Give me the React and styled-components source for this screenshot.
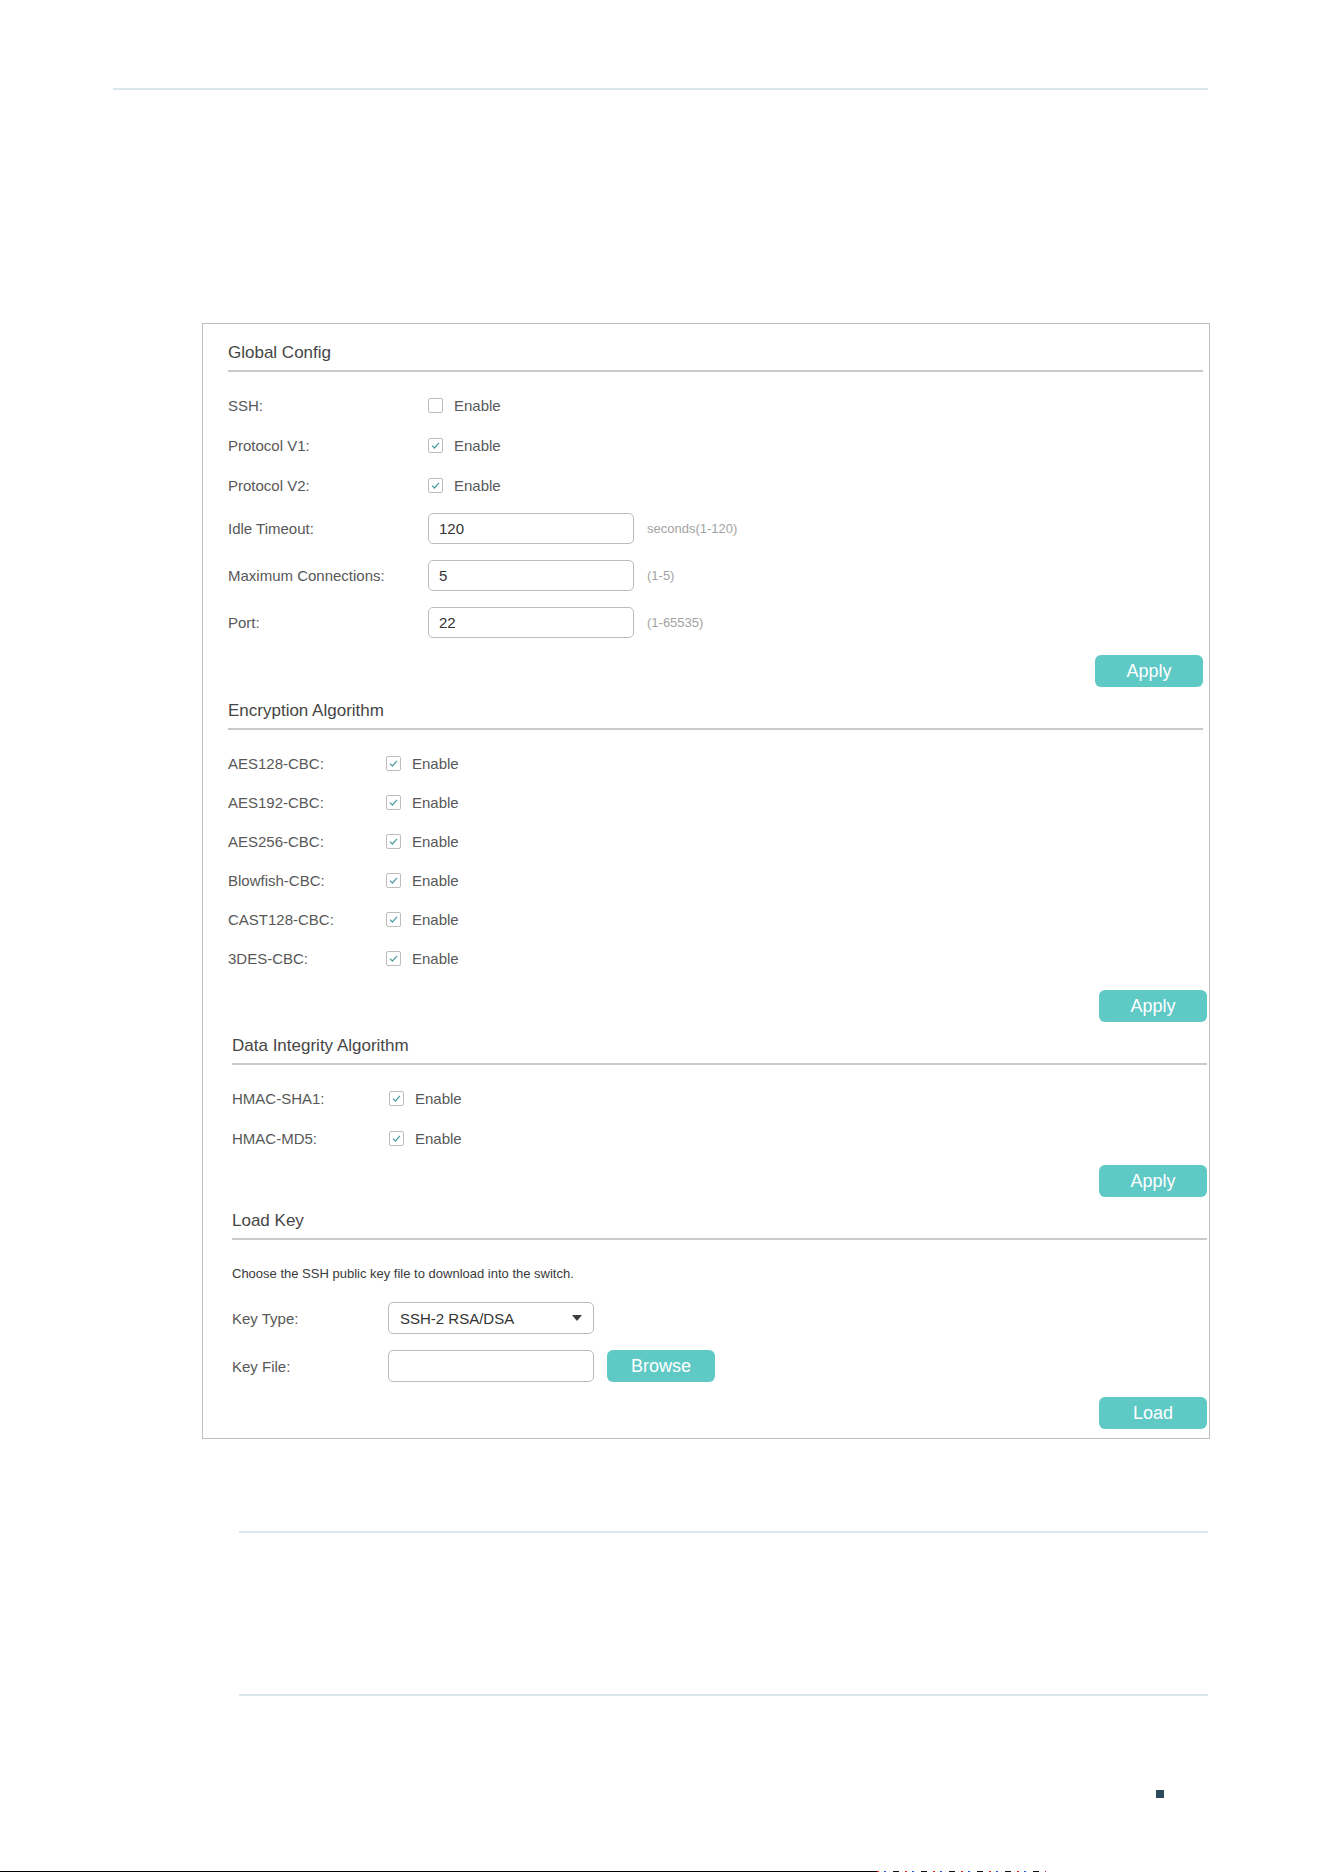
import React from 'react';
import styled, { createGlobalStyle } from 'styled-components';

const GlobalStyle = createGlobalStyle`
  html, body {
    margin: 0;
    padding: 0;
    background: #fff;
  }
  body {
    font-family: "Liberation Sans", Arial, sans-serif;
  }
`;

const Page = styled.div`
  width: 1324px;
  min-height: 1872px;
  padding-top: 88px;
  box-sizing: border-box;
  display: flex;
  flex-direction: column;
  background: #fff;
`;

const Rule = styled.div`
  height: 2px;
  background: #dce7eb;
  margin-left: ${props => props.$left}px;
  margin-top: ${props => props.$top || 0}px;
  width: ${props => 1208 - props.$left}px;
`;

const Figure = styled.div`
  margin: 233px 0 0 202px;
  width: 1008px;
  box-sizing: border-box;
  border: 1px solid #bfbfbf;
  padding: 0 6px 9px 25px;
  color: #555;
`;

const Section = styled.section`
  margin: ${props => props.$top}px ${props => -props.$shift}px 0 ${props => props.$shift}px;
`;

const SectionTitle = styled.h3`
  margin: 0;
  font-weight: normal;
  font-size: 17px;
  line-height: 20px;
  color: #464646;
  padding: 1px 0 7px;
  border-bottom: 2px solid #c6cacb;
`;

const Rows = styled.div`
  margin-top: ${props => props.$top}px;
  display: flex;
  flex-direction: column;
`;

const FieldRow = styled.div`
  height: ${props => props.$h}px;
  display: flex;
  align-items: center;
`;

const Label = styled.span`
  width: ${props => props.$w}px;
  flex-shrink: 0;
  font-size: 15px;
  color: #585858;
`;

const CheckWrap = styled.label`
  display: flex;
  align-items: center;
  gap: 11px;
  font-size: 15px;
  color: #585858;
`;

const Box = styled.span`
  width: 15px;
  height: 15px;
  box-sizing: border-box;
  border: 1px solid #bdbdbd;
  border-radius: 2px;
  display: flex;
  align-items: center;
  justify-content: center;
`;

const TextInput = styled.div`
  width: 206px;
  height: ${props => props.$h || 31}px;
  box-sizing: border-box;
  border: 1px solid #bcbcbc;
  border-radius: 5px;
  padding: 0 10px;
  display: flex;
  align-items: center;
  font-size: 15px;
  color: #333;
`;

const Hint = styled.span`
  margin-left: 13px;
  font-size: 13px;
  color: #a3a3a3;
`;

const Select = styled(TextInput)`
  justify-content: space-between;
  padding: 0 10px 0 11px;
`;

const Caret = styled.span`
  width: 0;
  height: 0;
  border-left: 5px solid transparent;
  border-right: 5px solid transparent;
  border-top: 6px solid #3d3d3d;
  margin-right: 1px;
`;

const ButtonRow = styled.div`
  margin: ${props => props.$top}px ${props => -(props.$shift || 0)}px 0 0;
  display: flex;
  justify-content: flex-end;
`;

const Button = styled.button`
  width: 108px;
  height: 32px;
  border: none;
  border-radius: 6px;
  background: #5fc9c6;
  color: #fff;
  font-family: "Liberation Sans", Arial, sans-serif;
  font-size: 18px;
  padding: 0;
  margin-left: ${props => props.$gap || 0}px;
`;

const Description = styled.p`
  margin: 26px 0 0;
  font-size: 13px;
  line-height: 16px;
  color: #3a3a3a;
`;

const PageMark = styled.div`
  margin: 94px 0 0 1156px;
  width: 8px;
  height: 8px;
  background: #2b4a5b;
`;

const ScanEdge = styled.div`
  margin-top: auto;
  height: 1px;
  width: 1046px;
  background:
    linear-gradient(90deg, #000 0, #000 877px, transparent 877px),
    repeating-linear-gradient(90deg, #e22 877px, #e22 879px, #fff 879px, #fff 884px, #25c 884px, #25c 886px, #fff 886px, #fff 893px, #111 893px, #111 899px, #fff 899px, #fff 905px);
`;

const Tick = () => (
  <svg width="11" height="11" viewBox="0 0 11 11">
    <path d="M2 5.6 L4.4 8 L9 2.8" fill="none" stroke="#4a9da0" strokeWidth="1.2" />
  </svg>
);

const Check = ({ checked }) => (
  <CheckWrap>
    <Box>{checked && <Tick />}</Box>
    Enable
  </CheckWrap>
);

const CheckRow = ({ label, labelW, h = 40, checked = true }) => (
  <FieldRow $h={h}>
    <Label $w={labelW}>{label}</Label>
    <Check checked={checked} />
  </FieldRow>
);

const InputRow = ({ label, value, hint }) => (
  <FieldRow $h={47}>
    <Label $w={200}>{label}</Label>
    <TextInput>{value}</TextInput>
    <Hint>{hint}</Hint>
  </FieldRow>
);

const ciphers = ['AES128-CBC:', 'AES192-CBC:', 'AES256-CBC:', 'Blowfish-CBC:', 'CAST128-CBC:', '3DES-CBC:'];

export default function App() {
  return (
    <>
      <GlobalStyle />
      <Page>
        <Rule $left={113} />

        <Figure>
          <Section $top={18} $shift={0}>
            <SectionTitle>Global Config</SectionTitle>
            <Rows $top={13}>
              <CheckRow label="SSH:" labelW={200} checked={false} />
              <CheckRow label="Protocol V1:" labelW={200} />
              <CheckRow label="Protocol V2:" labelW={200} />
              <InputRow label="Idle Timeout:" value="120" hint="seconds(1-120)" />
              <InputRow label="Maximum Connections:" value="5" hint="(1-5)" />
              <InputRow label="Port:" value="22" hint="(1-65535)" />
            </Rows>
            <ButtonRow $top={9}>
              <Button>Apply</Button>
            </ButtonRow>
          </Section>

          <Section $top={13} $shift={0}>
            <SectionTitle>Encryption Algorithm</SectionTitle>
            <Rows $top={14}>
              {ciphers.map(name => (
                <CheckRow key={name} label={name} labelW={158} h={39} />
              ))}
            </Rows>
            <ButtonRow $top={12} $shift={4}>
              <Button>Apply</Button>
            </ButtonRow>
          </Section>

          <Section $top={13} $shift={4}>
            <SectionTitle>Data Integrity Algorithm</SectionTitle>
            <Rows $top={13}>
              <CheckRow label="HMAC-SHA1:" labelW={157} />
              <CheckRow label="HMAC-MD5:" labelW={157} />
            </Rows>
            <ButtonRow $top={7}>
              <Button>Apply</Button>
            </ButtonRow>
          </Section>

          <Section $top={13} $shift={4}>
            <SectionTitle>Load Key</SectionTitle>
            <Description>Choose the SSH public key file to download into the switch.</Description>
            <Rows $top={12}>
              <FieldRow $h={48}>
                <Label $w={156}>Key Type:</Label>
                <Select $h={32}>
                  SSH-2 RSA/DSA
                  <Caret />
                </Select>
              </FieldRow>
              <FieldRow $h={48}>
                <Label $w={156}>Key File:</Label>
                <TextInput $h={32} />
                <Button $gap={13}>Browse</Button>
              </FieldRow>
            </Rows>
            <ButtonRow $top={7}>
              <Button>Load</Button>
            </ButtonRow>
          </Section>
        </Figure>

        <Rule $left={239} $top={92} />
        <Rule $left={239} $top={161} />

        <PageMark />
        <ScanEdge />
      </Page>
    </>
  );
}
